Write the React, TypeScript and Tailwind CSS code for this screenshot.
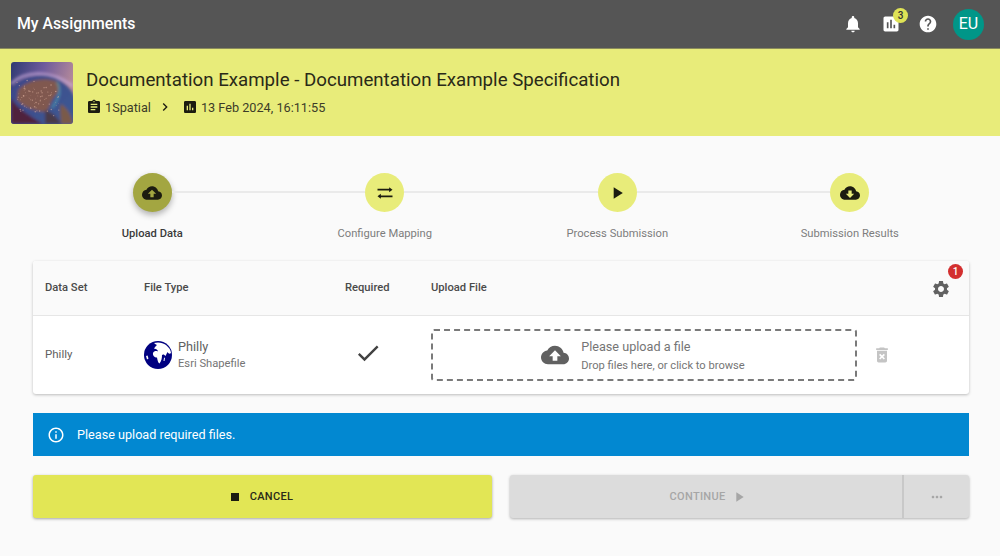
import type { ReactNode } from "react";

const paths = {
  bell: "M12 22c1.1 0 2-.9 2-2h-4c0 1.1.89 2 2 2zm6-6v-5c0-3.07-1.64-5.64-4.5-6.32V4c0-.83-.67-1.5-1.5-1.5s-1.5.67-1.5 1.5v.68C7.63 5.36 6 7.92 6 11v5l-2 2v1h16v-1l-2-2z",
  assessment: "M19 3H5c-1.1 0-2 .9-2 2v14c0 1.1.9 2 2 2h14c1.1 0 2-.9 2-2V5c0-1.1-.9-2-2-2zM9 17H7v-7h2v7zm4 0h-2V7h2v10zm4 0h-2v-4h2v4z",
  help: "M12 2C6.48 2 2 6.48 2 12s4.48 10 10 10 10-4.48 10-10S17.52 2 12 2zm1 17h-2v-2h2v2zm2.07-7.75l-.9.92C13.45 12.9 13 13.5 13 15h-2v-.5c0-1.1.45-2.1 1.17-2.83l1.24-1.26c.37-.36.59-.86.59-1.41 0-1.1-.9-2-2-2s-2 .9-2 2H8c0-2.21 1.79-4 4-4s4 1.79 4 4c0 .88-.36 1.68-.93 2.25z",
  assignment: "M19 3h-4.18C14.4 1.84 13.3 1 12 1c-1.3 0-2.4.84-2.82 2H5c-1.1 0-2 .9-2 2v14c0 1.1.9 2 2 2h14c1.1 0 2-.9 2-2V5c0-1.1-.9-2-2-2zm-7 0c.55 0 1 .45 1 1s-.45 1-1 1-1-.45-1-1 .45-1 1-1zm2 14H7v-2h7v2zm3-4H7v-2h10v2zm0-4H7V7h10v2z",
  chevron: "M10 6L8.59 7.41 13.17 12l-4.58 4.59L10 18l6-6z",
  upload: "M19.35 10.04C18.67 6.59 15.64 4 12 4 9.11 4 6.6 5.64 5.35 8.04 2.34 8.36 0 10.91 0 14c0 3.31 2.69 6 6 6h13c2.76 0 5-2.24 5-5 0-2.64-2.05-4.78-4.65-4.96zM14 13v4h-4v-4H7l5-5 5 5h-3z",
  download: "M19.35 10.04C18.67 6.59 15.64 4 12 4 9.11 4 6.6 5.64 5.35 8.04 2.34 8.36 0 10.91 0 14c0 3.31 2.69 6 6 6h13c2.76 0 5-2.24 5-5 0-2.64-2.05-4.78-4.65-4.96zM17 13l-5 5-5-5h3V9h4v4h3z",
  swap: "M3 7h14V5l4 3-4 3V9H3zM21 15H7v-2l-4 3 4 3v-2h14z",
  play: "M8 5v14l11-7z",
  check: "M9 16.17L4.83 12l-1.42 1.41L9 19 21 7l-1.41-1.41z",
  settings: "M19.14 12.94c.04-.3.06-.61.06-.94 0-.32-.02-.64-.07-.94l2.03-1.58c.18-.14.23-.41.12-.61l-1.92-3.32c-.12-.22-.37-.29-.59-.22l-2.39.96c-.5-.38-1.03-.7-1.62-.94l-.36-2.54c-.04-.24-.24-.41-.48-.41h-3.84c-.24 0-.43.17-.47.41l-.36 2.54c-.59.24-1.13.57-1.62.94l-2.39-.96c-.22-.08-.47 0-.59.22L2.74 8.87c-.12.21-.08.47.12.61l2.03 1.58c-.05.3-.09.63-.09.94s.02.64.07.94l-2.03 1.58c-.18.14-.23.41-.12.61l1.92 3.32c.12.22.37.29.59.22l2.39-.96c.5.38 1.03.7 1.62.94l.36 2.54c.05.24.24.41.48.41h3.84c.24 0 .44-.17.47-.41l.36-2.54c.59-.24 1.13-.56 1.62-.94l2.39.96c.22.08.47 0 .59-.22l1.92-3.32c.12-.22.07-.47-.12-.61l-2.01-1.58zM12 15.6c-1.98 0-3.6-1.62-3.6-3.6s1.62-3.6 3.6-3.6 3.6 1.62 3.6 3.6-1.62 3.6-3.6 3.6z",
  trash: "M6 19c0 1.1.9 2 2 2h8c1.1 0 2-.9 2-2V7H6v12zm2.46-7.12l1.41-1.41L12 12.59l2.12-2.12 1.41 1.41L13.41 14l2.12 2.12-1.41 1.41L12 15.41l-2.12 2.12-1.41-1.41L10.59 14l-2.13-2.12zM15.5 4l-1-1h-5l-1 1H5v2h14V4z",
  info: "M11 7h2v2h-2zm0 4h2v6h-2zm1-9C6.48 2 2 6.48 2 12s4.48 10 10 10 10-4.48 10-10S17.52 2 12 2zm0 18c-4.41 0-8-3.59-8-8s3.59-8 8-8 8 3.59 8 8-3.59 8-8 8z",
  stop: "M6 6h12v12H6z",
  more: "M6 10c-1.1 0-2 .9-2 2s.9 2 2 2 2-.9 2-2-.9-2-2-2zm12 0c-1.1 0-2 .9-2 2s.9 2 2 2 2-.9 2-2-.9-2-2-2zm-6 0c-1.1 0-2 .9-2 2s.9 2 2 2 2-.9 2-2-.9-2-2-2z",
};

function Icon({ d, className }: { d: string; className: string }) {
  return (
    <svg viewBox="0 0 24 24" fill="currentColor" className={className}>
      <path d={d} />
    </svg>
  );
}

// city lights: hashed positions so there is no visible grid, same on every render
function hash(n: number) {
  const v = Math.sin(n * 12.9898) * 43758.5453;
  return v - Math.floor(v);
}

const lights = Array.from({ length: 80 }, (_, i) => {
  const x = 6 + hash(i + 1) * 42;
  const y = 18 + hash(i + 200) * 32 + (x > 32 ? 4 : 0);
  return { x, y, r: 0.3 + hash(i + 400) * 0.5 };
});

function EarthThumb() {
  return (
    <svg viewBox="0 0 62 62" className="w-[62px] h-[62px] rounded-[3px] shrink-0">
      <defs>
        <linearGradient id="sky" x1="0" y1="0" x2="1" y2="0.3">
          <stop offset="0" stopColor="#2f3a72" />
          <stop offset="0.5" stopColor="#6d5a9c" />
          <stop offset="1" stopColor="#b58a9a" />
        </linearGradient>
        <linearGradient id="ocean" x1="0" y1="0" x2="1" y2="1">
          <stop offset="0" stopColor="#3b4488" />
          <stop offset="1" stopColor="#3f5f96" />
        </linearGradient>
        <filter id="soft">
          <feGaussianBlur stdDeviation="1.8" />
        </filter>
        <filter id="softer">
          <feGaussianBlur stdDeviation="0.4" />
        </filter>
      </defs>
      <rect width="62" height="62" fill="url(#sky)" />
      <g filter="url(#soft)">
        <path d="M0 22 C14 8 40 8 62 24" stroke="#c8a8d8" strokeWidth="3" fill="none" opacity="0.7" />
        <circle cx="30" cy="50" r="37" fill="url(#ocean)" />
        <path d="M7 28 C16 18 32 15 45 19 C51 22 48 30 44 34 C39 40 39 46 35 50 C26 50 13 46 6 38 Z" fill="#80584f" />
        <path d="M34 48 C40 50 46 54 50 62 L34 62 Z" fill="#4a3a4a" />
        <path d="M0 62 L0 36 C6 46 16 52 32 62 Z" fill="#50203e" />
        <path d="M50 42 C56 46 60 52 62 62 L50 62 C50 54 48 48 50 42Z" fill="#7a5a4a" />
        <path d="M46 20 C51 28 47 38 41 46" stroke="#52b0c0" strokeWidth="2" fill="none" opacity="0.6" />
      </g>
      <g filter="url(#softer)">
        {lights.map((l, i) => (
          <circle key={i} cx={l.x} cy={l.y} r={l.r} fill="#e6b8a4" opacity="0.55" />
        ))}
      </g>
    </svg>
  );
}

function GlobeIcon() {
  return (
    <svg viewBox="0 0 28 28" className="w-[28px] h-[28px] shrink-0">
      <circle cx="14" cy="14" r="14" fill="#000080" />
      <path d="M10 2 C14 .8 19 1.5 22 4 C25 6.5 26.8 9 27 12 C25.5 13.5 24.5 12.5 23.5 11 L21.5 15 C20.5 13.5 19 13 18 14 C18 17 17.5 20 15.5 22.5 C14 22 13.5 19 13 16.5 C10.5 16.5 8.5 14.5 9 12 C10 10 12 9.5 14 10.5 C13.5 8.5 11.5 7.5 10 8 C10.5 6 12 5 13 4 C12 3.5 11 3 10 2 Z" fill="#fff" />
      <path d="M2 15 L3.5 14.5 L4.5 17.5 L3 18.5 Z" fill="#fff" />
      <path d="M20 17 L21 16.5 L20.5 20 L19.5 20 Z" fill="#fff" />
    </svg>
  );
}

type Step = { label: string; icon: string };

const steps: Step[] = [
  { label: "Upload Data", icon: paths.upload },
  { label: "Configure Mapping", icon: paths.swap },
  { label: "Process Submission", icon: paths.play },
  { label: "Submission Results", icon: paths.download },
];

function Stepper() {
  return (
    <div className="grid grid-cols-4 mx-[36px] w-[930px] pt-[37px]">
      {steps.map((step, i) => {
        const active = i === 0;
        return (
          <div key={step.label} className="flex flex-col items-center">
            <div className="flex items-center w-full">
              <div className={`flex-1 h-[2px] -mt-[2px] ${i === 0 ? "" : "bg-[#eaeaea]"}`} />
              <div
                className={`w-[39px] h-[39px] rounded-full flex items-center justify-center text-[#1c1c10] ${
                  active ? "bg-[#a3a641] shadow-[0_3px_6px_rgba(0,0,0,0.3)]" : "bg-[#e8ec7a]"
                }`}
              >
                <Icon d={step.icon} className="w-5 h-5" />
              </div>
              <div className={`flex-1 h-[2px] -mt-[2px] ${i === 3 ? "" : "bg-[#eaeaea]"}`} />
            </div>
            <div
              className={`mt-[14px] text-[11.2px] leading-[16px] ${
                active ? "font-medium text-[#3a3a3a]" : "text-[#7d7d7d]"
              }`}
            >
              {step.label}
            </div>
          </div>
        );
      })}
    </div>
  );
}

function HeaderCell({ children }: { children: ReactNode }) {
  return <div className="text-[11.2px] font-medium text-[#4a4a4a]">{children}</div>;
}

function UploadTable() {
  return (
    <div className="ml-[33px] w-[936px] mt-[19px] rounded-[3px] bg-white shadow-[0_1px_3px_rgba(0,0,0,0.25)]">
      <div className="h-[55px] grid grid-cols-[99px_201px_86px_1fr_72px] items-center pl-[12px] bg-[#fafafa] border-b border-[#e6e6e6] rounded-t-[3px]">
        <HeaderCell>Data Set</HeaderCell>
        <HeaderCell>File Type</HeaderCell>
        <HeaderCell>Required</HeaderCell>
        <HeaderCell>Upload File</HeaderCell>
        <div className="flex justify-center relative">
          <Icon d={paths.settings} className="w-5 h-5 text-[#616161] ml-[16px] mt-[1px]" />
          <span className="absolute -top-[14px] left-[51px] w-[15px] h-[15px] rounded-full bg-[#d32f2f] text-white text-[10px] font-medium leading-[15px] text-center">
            1
          </span>
        </div>
      </div>
      <div className="h-[78px] grid grid-cols-[99px_201px_86px_426px_1fr] items-center pl-[12px]">
        <div className="text-[11.5px] text-[#616161]">Philly</div>
        <div className="flex items-center gap-[6px]">
          <GlobeIcon />
          <div>
            <div className="text-[12.7px] leading-[16px] text-[#616161]">Philly</div>
            <div className="text-[11.2px] leading-[16px] mt-[1px] text-[#757575]">Esri Shapefile</div>
          </div>
        </div>
        <div>
          <Icon d={paths.check} className="w-[28px] h-[28px] text-[#424242] ml-[9px] -mt-[4px]" />
        </div>
        <div className="h-[52px] border-2 border-dashed border-[#7a7a7a] rounded-[3px] flex items-center justify-center gap-[12px] pr-[2px]">
          <Icon d={paths.upload} className="w-[28px] h-[28px] text-[#616161] -mt-[1px]" />
          <div className="mt-[1px]">
            <div className="text-[12.65px] leading-[18px] text-[#757575]">Please upload a file</div>
            <div className="text-[11.15px] leading-[16px] mt-[2px] text-[#757575]">Drop files here, or click to browse</div>
          </div>
        </div>
        <Icon d={paths.trash} className="w-5 h-5 text-[#c4c4c4] ml-[15px]" />
      </div>
    </div>
  );
}

export default function App() {
  return (
    <div className="w-[1000px] h-[556px] overflow-hidden bg-[#fafafa] font-[Roboto,sans-serif]">
      <header className="h-[49px] bg-[#555555] border-b border-[#8a8b5c] flex items-center pl-[17px] pr-[16px] text-white">
        <h1 className="text-[15.8px] font-medium">My Assignments</h1>
        <div className="ml-auto flex items-center">
          <Icon d={paths.bell} className="w-5 h-5" />
          <div className="relative ml-[18px]">
            <Icon d={paths.assessment} className="w-5 h-5" />
            <span className="absolute -top-[6px] left-[12px] w-[15px] h-[15px] rounded-full bg-[#dfe356] text-[#333] text-[10px] font-medium leading-[15px] text-center">
              3
            </span>
          </div>
          <Icon d={paths.help} className="w-5 h-5 ml-[17px]" />
          <div className="ml-[15px] w-[31px] h-[31px] rounded-full bg-[#009688] flex items-center justify-center text-[16px]">
            EU
          </div>
        </div>
      </header>

      <section className="h-[87px] bg-[#e8ec7a] flex items-center pl-[11px] text-[#2a2a18]">
        <EarthThumb />
        <div className="ml-[13px] pb-[2px]">
          <h2 className="text-[18.7px] leading-[28px]">
            Documentation Example - Documentation Example Specification
          </h2>
          <div className="mt-[4px] flex items-center text-[12.7px] text-[#3c3c28]">
            <Icon d={paths.assignment} className="w-4 h-4 text-[#1c1c10]" />
            <span className="ml-[3px]">1Spatial</span>
            <Icon d={paths.chevron} className="w-4 h-4 ml-[6px] text-[#1c1c10]" />
            <Icon d={paths.assessment} className="w-4 h-4 ml-[9px] text-[#1c1c10]" />
            <span className="ml-[3px]">13 Feb 2024, 16:11:55</span>
          </div>
        </div>
      </section>

      <Stepper />
      <UploadTable />

      <div className="ml-[33px] w-[936px] mt-[19px] h-[43px] bg-[#0288d1] flex items-center pl-[14px] text-white">
        <Icon d={paths.info} className="w-[18px] h-[18px]" />
        <span className="ml-[12px] pt-[2px] text-[12.65px]">Please upload required files.</span>
      </div>

      <div className="ml-[33px] w-[936px] mt-[19px] grid grid-cols-2 gap-[18px]">
        <button className="h-[43px] rounded-[3px] bg-[#e2e655] shadow-[0_1px_3px_rgba(0,0,0,0.35)] flex items-center justify-center pr-[5px] text-[11px] font-medium text-[#2a2a18] tracking-[0.3px]">
          <Icon d={paths.stop} className="w-4 h-4 text-[#1c1c10]" />
          <span className="ml-[7px] pt-[2px]">CANCEL</span>
        </button>
        <div className="h-[43px] rounded-[3px] bg-[#dcdcdc] shadow-[0_1px_3px_rgba(0,0,0,0.3)] flex text-[#a6a6a6]">
          <button className="flex-1 flex items-center justify-center pl-[5px] text-[11px] font-medium tracking-[0.3px]">
            <span className="pt-[2px]">CONTINUE</span>
            <Icon d={paths.play} className="w-4 h-4 ml-[6px]" />
          </button>
          <button className="w-[67px] border-l-2 border-[#c8c8c8] flex items-center justify-center">
            <Icon d={paths.more} className="w-4 h-4" />
          </button>
        </div>
      </div>
    </div>
  );
}
